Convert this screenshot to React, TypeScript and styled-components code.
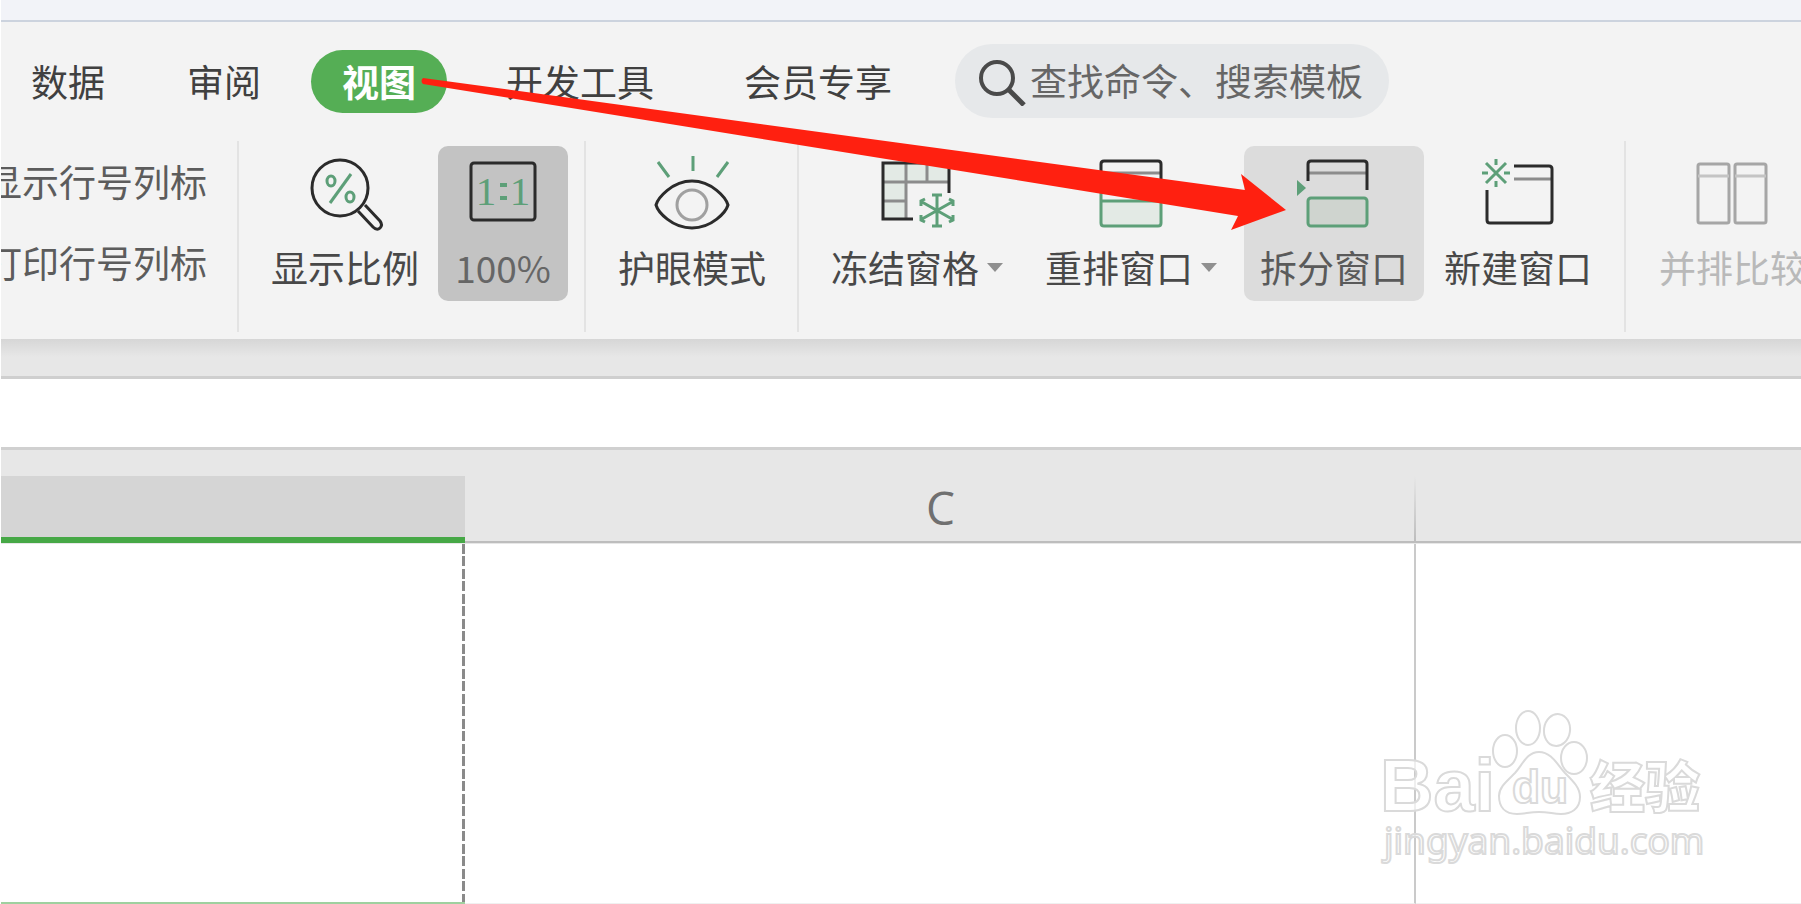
import React from 'react';
import styled, { createGlobalStyle, css } from 'styled-components';

const INK = '#2b2b2b';
const SOFT = '#8c8c8c';
const GREEN = '#5d9f78';
const PALE = '#e3eae5';
const TEXT = '#484848';

const GlobalStyle = createGlobalStyle`
  * { box-sizing: border-box; }
  body {
    margin: 0;
    background: #fff;
    overflow: hidden;
    font-family: "Noto Sans CJK SC", "Noto Sans", sans-serif;
  }
  button, input { font: inherit; color: inherit; }
`;

const Page = styled.div`
  position: relative;
  display: flex;
  flex-direction: column;
  min-height: 100vh;
  padding-left: 1px;
  overflow: hidden;
  color: ${TEXT};
  font-size: 37px;
  line-height: 48px;
`;

const TitleStrip = styled.header`
  height: 22px;
  flex: none;
  background: #f2f3f8;
  border-bottom: 2px solid #ccd3de;
`;

const MenuBar = styled.nav`
  display: flex;
  align-items: center;
  flex: none;
  padding: 22px 0 0 30px;
  background: #f3f3f3;
`;

const Tab = styled.button<{ $active?: boolean; $after: number }>`
  flex: none;
  height: 63px;
  margin: 0 ${p => p.$after}px 0 0;
  padding: 0 ${p => (p.$active ? 31 : 0)}px;
  border: 0;
  border-radius: 32px;
  background: ${p => (p.$active ? '#55ae55' : 'transparent')};
  color: ${p => (p.$active ? '#fff' : '#404040')};
  font-weight: ${p => (p.$active ? 700 : 400)};
  white-space: nowrap;
`;

const Search = styled.label`
  display: flex;
  align-items: center;
  flex: none;
  width: 434px;
  height: 74px;
  padding-left: 23px;
  border-radius: 37px;
  background: #e6e8ea;
  color: #666;
`;

const SearchInput = styled.input`
  flex: 1;
  min-width: 0;
  height: 48px;
  margin-left: 2px;
  padding: 0 0 3px;
  border: 0;
  outline: 0;
  background: transparent;
  &::placeholder { color: #666; opacity: 1; }
`;

const Ribbon = styled.div`
  display: flex;
  flex: none;
  padding: 23px 0 7px;
  background: #f3f3f3;
`;

const Group = styled.section`
  display: flex;
  flex: none;
  gap: 4px;
  height: 191px;
  padding: 5px 16px 0 17px;
  border-right: 2px solid #e3e3e3;
  &:last-child { border-right: 0; }
`;

const OptionGroup = styled(Group)`
  flex-direction: column;
  align-items: flex-end;
  width: 238px;
  gap: 33px;
  padding: 16px 30px 0 0;
  overflow: hidden;
`;

const Option = styled.label`
  display: flex;
  align-items: center;
  gap: 8px;
  color: #5c5c5c;
  white-space: nowrap;
`;

const Tool = styled.button<{ $width: number; $menu?: boolean; $tone?: 'pressed' | 'hover' }>`
  display: flex;
  flex-direction: column;
  align-items: center;
  flex: none;
  gap: 10px;
  width: ${p => p.$width}px;
  height: 155px;
  padding: 7px ${p => (p.$menu ? 8 : 0)}px 0 0;
  border: 0;
  border-radius: 10px;
  background: transparent;
  color: ${TEXT};
  white-space: nowrap;
  ${p => p.$tone === 'pressed' && css`background: #c3c3c3; color: #666;`}
  ${p => p.$tone === 'hover' && css`background: #dcdcdc; color: #5a5a5a;`}
  &:disabled { color: #b9b9b9; }
`;

const ToolLabel = styled.span`
  display: flex;
  align-items: center;
  gap: 8px;
`;

const Caret = styled.span`
  border: 8px solid transparent;
  border-top: 9px solid #8f8f8f;
  border-bottom: 0;
`;

const Glyph = styled.svg`
  display: block;
  flex: none;
  width: 80px;
  height: 80px;
  overflow: visible;
  fill: none;
  stroke: ${INK};
  stroke-width: 3;
`;

const RibbonShade = styled.div`
  flex: none;
  height: 40px;
  border-bottom: 3px solid #cfcfcf;
  background: linear-gradient(#d6d6d6, #e7e7e7 18px);
`;

const FormulaBar = styled.div`
  flex: none;
  height: 71px;
  border-bottom: 3px solid #d0d0d0;
  background: #fff;
`;

const Sheet = styled.table`
  display: flex;
  flex-direction: column;
  flex: 1;
`;

const HeadSection = styled.thead`
  display: block;
  padding-top: 26px;
  background: #e7e7e7;
`;

const BodySection = styled.tbody`
  display: flex;
  flex: 1;
`;

const SheetRow = styled.tr`
  display: grid;
  flex: 1;
  grid-template-columns: 464px 951px 1fr;
`;

const HeadCell = styled.th<{ $selected?: boolean }>`
  height: 67px;
  padding: 0;
  border-bottom: ${p => (p.$selected ? '6px solid #46a846' : '2px solid #bdbdbd')};
  margin-bottom: ${p => (p.$selected ? 0 : 1)}px;
  background: ${p => (p.$selected ? '#d5d5d5' : 'linear-gradient(#e7e7e7, #bdbdbd) right / 2px 100% no-repeat')};
  color: #707070;
  font: 400 46px/62px "Open Sans", "Noto Sans", sans-serif;
  &:last-child { background: none; }
`;

const Cell = styled.td<{ $edge?: 'break' | 'line' }>`
  padding: 0;
  border-bottom: 1px solid #f0f0f0;
  ${p => p.$edge === 'break' && css`
    border-bottom: 2px solid #9fd09f;
    background: repeating-linear-gradient(#8a8a8a 0 10px, #fff 10px 12px, #8a8a8a 12px 22px, #fff 22px 25px) right / 3px 100% no-repeat;
  `}
  ${p => p.$edge === 'line' && css`border-right: 2px solid #cacaca;`}
`;

const Pointer = styled.svg`
  position: absolute;
  left: 420px;
  top: 70px;
  width: 870px;
  height: 164px;
  pointer-events: none;
`;

const Watermark = styled.svg`
  position: absolute;
  right: 90px;
  bottom: 32px;
  width: 336px;
  height: 170px;
  fill: rgba(255, 255, 255, 0.7);
  stroke: #dadada;
  stroke-width: 2;
  pointer-events: none;
`;

const ZoomGlyph = () => (
  <Glyph viewBox="0 0 80 80">
    <circle cx="35" cy="35" r="28" />
    <path d="M53 58 L68 74 Q72 78 75 75 Q78 72 75 68 L60 52" />
    <g stroke={GREEN}>
      <ellipse cx="26" cy="28" rx="4" ry="5" />
      <ellipse cx="45" cy="44" rx="4" ry="5" />
      <path d="M25 50 L46 21" />
    </g>
  </Glyph>
);

const ActualSizeGlyph = () => (
  <Glyph viewBox="0 0 80 80">
    <rect x="8" y="10" width="64" height="57" rx="3" />
    <g fill={GREEN} stroke="none" fontFamily="Liberation Serif, serif" fontSize="41" textAnchor="middle">
      <text x="23" y="52">1</text>
      <text x="57" y="52">1</text>
      <rect x="37" y="30" width="7" height="4" />
      <rect x="37" y="43" width="7" height="4" />
    </g>
  </Glyph>
);

const EyeGlyph = () => (
  <Glyph viewBox="0 0 80 80">
    <path d="M4 52 C6 45 20 28 40 28 S74 45 76 52 C74 59 60 75 40 75 S6 59 4 52 Z" />
    <circle cx="40" cy="52" r="15" stroke="#a0a0a0" />
    <path d="M6 9 L17 24 M41 3 V18 M76 9 L65 24" stroke={GREEN} />
  </Glyph>
);

const FreezeGlyph = () => (
  <Glyph viewBox="0 0 80 80">
    <path d="M6 10 H72 V29 H29 V66 H6 Z" fill={PALE} stroke="none" />
    <path d="M29 10 V66 M50 10 V29 M6 29 H72 M6 48 H29" stroke={SOFT} />
    <path d="M36 66 H6 V10 H72 V40" />
    <path
      d="M60 42 V73 M55 42 H65 M55 73 H65 M45 49 L75 66 M75 49 L45 66 M44 53 V48 L48 46 M76 53 V48 L72 46 M44 62 V67 L48 69 M76 62 V67 L72 69"
      stroke={GREEN}
    />
  </Glyph>
);

const ArrangeGlyph = () => (
  <Glyph viewBox="0 0 80 80">
    <path d="M10 48 H70 V70 Q70 73 67 73 H13 Q10 73 10 70 Z" fill={PALE} stroke="none" />
    <path d="M10 20 H70" stroke={SOFT} />
    <path d="M10 34 V11 Q10 8 13 8 H67 Q70 8 70 11 V34" />
    <path d="M10 40 V70 Q10 73 13 73 H67 Q70 73 70 70 V40 M10 48 H70" stroke={GREEN} />
  </Glyph>
);

const SplitGlyph = () => (
  <Glyph viewBox="0 0 80 80">
    <path d="M14 20 H73" stroke={SOFT} />
    <path d="M14 28 V11 Q14 8 17 8 H70 Q73 8 73 11 V37" />
    <rect x="14" y="45" width="59" height="28" rx="3" stroke={GREEN} fill="#cfd4cf" />
    <path d="M3 27 L12 35 L3 43 Z" fill={GREEN} stroke="none" />
  </Glyph>
);

const NewWindowGlyph = () => (
  <Glyph viewBox="0 0 80 80">
    <path d="M36 26 H74" stroke={SOFT} />
    <path d="M36 13 H71 Q74 13 74 16 V67 Q74 70 71 70 H12 Q9 70 9 67 V37" />
    <path
      d="M18 6 V12 M18 28 V34 M4 20 H10 M26 20 H32 M8 10 L28 30 M28 10 L8 30"
      stroke={GREEN}
    />
  </Glyph>
);

const SideBySideGlyph = () => (
  <Glyph viewBox="0 0 80 80">
    <g stroke="#a6a6a6">
      <rect x="5" y="11" width="31" height="59" rx="2" />
      <rect x="42" y="11" width="31" height="59" rx="2" />
      <path d="M5 23 H36 M42 23 H73" stroke="#c4c4c4" />
    </g>
  </Glyph>
);

const SearchGlyph = () => (
  <svg width="50" height="50" viewBox="0 0 50 50" fill="none" stroke="#4a4a4a" strokeWidth="4">
    <circle cx="19" cy="22" r="16" />
    <path d="M31 34 L46 49" strokeWidth="5" />
  </svg>
);

export default function App() {
  return (
    <>
      <GlobalStyle />
      <Page>
        <TitleStrip />
        <MenuBar>
          <Tab $after={82}>数据</Tab>
          <Tab $after={50}>审阅</Tab>
          <Tab $after={59} $active>视图</Tab>
          <Tab $after={90}>开发工具</Tab>
          <Tab $after={63}>会员专享</Tab>
          <Search>
            <SearchGlyph />
            <SearchInput type="search" aria-label="查找命令、搜索模板" placeholder="查找命令、搜索模板" />
          </Search>
        </MenuBar>
        <Ribbon>
          <OptionGroup>
            <Option><input type="checkbox" />显示行号列标</Option>
            <Option><input type="checkbox" />打印行号列标</Option>
          </OptionGroup>
          <Group>
            <Tool $width={178}><ZoomGlyph /><ToolLabel>显示比例</ToolLabel></Tool>
            <Tool $width={130} $tone="pressed"><ActualSizeGlyph /><ToolLabel>100%</ToolLabel></Tool>
          </Group>
          <Group>
            <Tool $width={178}><EyeGlyph /><ToolLabel>护眼模式</ToolLabel></Tool>
          </Group>
          <Group>
            <Tool $width={210} $menu><FreezeGlyph /><ToolLabel>冻结窗格<Caret /></ToolLabel></Tool>
            <Tool $width={210} $menu><ArrangeGlyph /><ToolLabel>重排窗口<Caret /></ToolLabel></Tool>
            <Tool $width={180} $tone="hover"><SplitGlyph /><ToolLabel>拆分窗口</ToolLabel></Tool>
            <Tool $width={180}><NewWindowGlyph /><ToolLabel>新建窗口</ToolLabel></Tool>
          </Group>
          <Group>
            <Tool $width={180} disabled><SideBySideGlyph /><ToolLabel>并排比较</ToolLabel></Tool>
          </Group>
        </Ribbon>
        <RibbonShade />
        <FormulaBar />
        <Sheet>
          <HeadSection>
            <SheetRow>
              <HeadCell $selected />
              <HeadCell>C</HeadCell>
              <HeadCell />
            </SheetRow>
          </HeadSection>
          <BodySection>
            <SheetRow>
              <Cell $edge="break" />
              <Cell $edge="line" />
              <Cell />
            </SheetRow>
          </BodySection>
        </Sheet>
        <Watermark viewBox="0 0 336 170">
          <ellipse cx="130" cy="49" rx="12" ry="16" />
          <ellipse cx="153" cy="26" rx="12" ry="17" />
          <ellipse cx="182" cy="28" rx="13" ry="16" transform="rotate(8 182 28)" />
          <ellipse cx="199" cy="56" rx="13" ry="16" />
          <path d="M164 50 C176 50 182 62 190 71 C199 80 205 86 205 95 C205 107 196 112 186 112 C178 112 174 110 164 110 C154 110 150 112 142 112 C130 112 124 105 124 94 C124 85 132 79 140 71 C148 62 152 50 164 50 Z" />
          <g fontFamily="Liberation Sans, sans-serif" fontWeight="700">
            <text x="5" y="109" fontSize="74">Bai</text>
            <text x="137" y="101" fontSize="46">du</text>
          </g>
          <text x="215" y="105" fontSize="55" fontWeight="900">经验</text>
          <text x="9" y="152" fontSize="37" fontFamily="Noto Sans, sans-serif">jingyan.baidu.com</text>
        </Watermark>
        <Pointer viewBox="0 0 870 164">
          <path d="M3 8 L825 120 L821 104 L866 140 L811 160 L818 146 L3 14 Q0 11 3 8 Z" fill="#ff2010" />
        </Pointer>
      </Page>
    </>
  );
}
